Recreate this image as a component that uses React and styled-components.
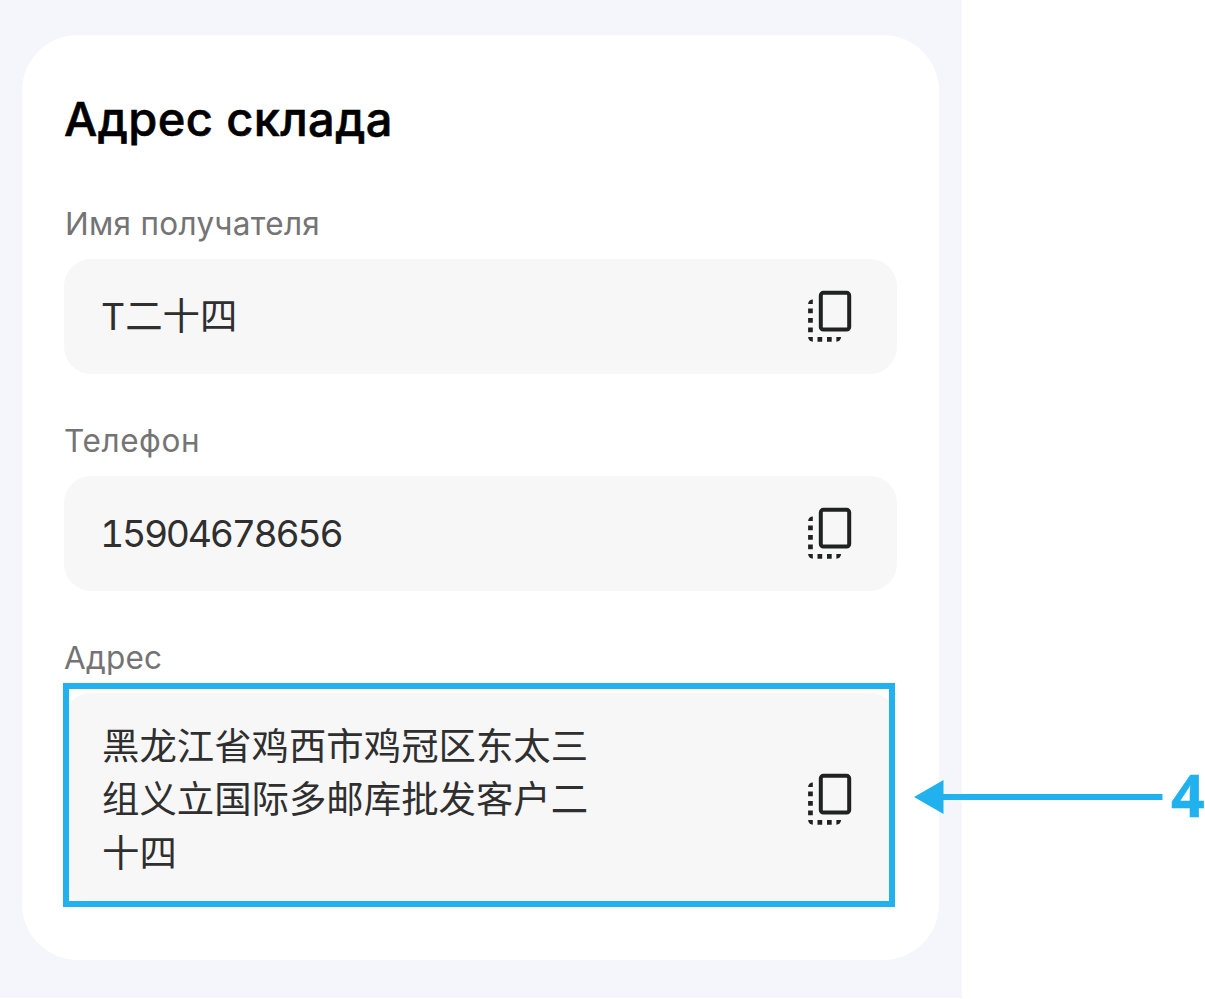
import React from 'react';
import styled, { createGlobalStyle } from 'styled-components';

const GlobalStyle = createGlobalStyle`
  * {
    box-sizing: border-box;
  }

  body {
    margin: 0;
    background: #fff;
    font-family: Inter, 'Noto Sans CJK SC', sans-serif;
    overflow: hidden;
  }
`;

const Page = styled.div`
  display: flex;
  width: 1205px;
  height: 999px;
`;

const Panel = styled.main`
  flex: none;
  width: 962px;
  height: 998px;
  padding: 34.5px 23px 0 22px;
  background: #f4f6fb;
`;

const Card = styled.section`
  height: 925px;
  padding: 54px 42px 0;
  border-radius: 56px;
  background: #fff;
`;

const Title = styled.h1`
  margin: 0;
  height: 60px;
  font-size: 47px;
  font-weight: 500;
  line-height: 60px;
  letter-spacing: ${(props) => props.$spacing};
  color: #000;
  -webkit-text-stroke: 0.6px #000;
  white-space: nowrap;
`;

const Field = styled.div`
  margin-top: ${(props) => props.$gap}px;
`;

const Label = styled.div`
  height: 40px;
  padding-left: ${(props) => props.$indent || 0}px;
  font-size: 31.5px;
  line-height: 40px;
  letter-spacing: ${(props) => props.$spacing || 'normal'};
  color: #747474;
  white-space: nowrap;
`;

const ValueBox = styled.div`
  display: flex;
  align-items: center;
  justify-content: space-between;
  height: 115px;
  margin-top: 15px;
  padding: 0 45px 0 38px;
  border-radius: 27px;
  background: #f7f7f7;
`;

const Value = styled.span`
  max-width: 500px;
  padding-top: 2px;
  margin-left: ${(props) => props.$shift || 0}px;
  font-size: 37.4px;
  line-height: 53.4px;
  letter-spacing: ${(props) => props.$spacing || 'normal'};
  font-feature-settings: 'tnum';
  color: #2f2f2f;
`;

const Highlight = styled.div`
  width: 832px;
  height: 224px;
  margin: 5px 0 0 -1px;
  border: 6px solid #20b1ee;
  overflow: hidden;
`;

const AddressBox = styled(ValueBox)`
  width: 833px;
  height: 213px;
  margin: 4px 0 0 -5px;
`;

const CopyButton = styled.button`
  flex: none;
  display: flex;
  padding: 0;
  border: 0;
  background: none;
  cursor: pointer;
`;

const Callout = styled.aside`
  position: absolute;
  top: 757px;
  left: 914px;
  display: flex;
  align-items: center;
  height: 80px;
`;

const CalloutNumber = styled.span`
  margin: -6px 0 0 8px;
  font-family: 'Open Sans', sans-serif;
  font-size: 59px;
  font-weight: 700;
  line-height: 80px;
  color: #20b1ee;
  -webkit-text-stroke: 0.5px #20b1ee;
`;

const CopyIcon = () => (
  <svg width="44" height="52" viewBox="0 0 44 52" fill="#202221">
    <rect x="12.8" y="2.8" width="28.4" height="36.8" rx="2.6" fill="none" stroke="#202221" strokeWidth="4" />
    <path d="M4.8 9.4v4.7H.1A4.7 4.7 0 0 1 4.8 9.4Z" />
    <path d="M.1 18.6h4.7v4.7H.1ZM.1 28h4.7v4.7H.1ZM.1 37.6h4.7v4.7H.1Z" />
    <path d="M.1 47h4.7v4.7A4.7 4.7 0 0 1 .1 47Z" />
    <path d="M9.5 47h4.7v4.7H9.5ZM19 47h4.7v4.7H19Z" />
    <path d="M28.4 47h4.7a4.7 4.7 0 0 1-4.7 4.7Z" />
  </svg>
);

const Arrow = () => (
  <svg width="249" height="34" viewBox="0 0 249 34" fill="#20b1ee">
    <path d="M0 17 29.5 0v14H248.5v6H29.5v14Z" />
  </svg>
);

const Copy = () => (
  <CopyButton type="button">
    <CopyIcon />
  </CopyButton>
);

const App = () => {
  return (
    <Page>
      <GlobalStyle />
      <Panel>
        <Card>
          <Title $spacing="0.4px">Адрес склада</Title>
          <Field $gap={55}>
            <Label $spacing="0.3px" $indent={1}>Имя получателя</Label>
            <ValueBox>
              <Value $shift={-1}>T二十四</Value>
              <Copy />
            </ValueBox>
          </Field>
          <Field $gap={47}>
            <Label $spacing="0.6px">Телефон</Label>
            <ValueBox>
              <Value $spacing="-2.3px" $shift={-2}>15904678656</Value>
              <Copy />
            </ValueBox>
          </Field>
          <Field $gap={47}>
            <Label $spacing="0.2px">Адрес</Label>
            <Highlight>
              <AddressBox>
                <Value>黑龙江省鸡西市鸡冠区东太三组义立国际多邮库批发客户二十四</Value>
                <Copy />
              </AddressBox>
            </Highlight>
          </Field>
        </Card>
      </Panel>
      <Callout>
        <Arrow />
        <CalloutNumber>4</CalloutNumber>
      </Callout>
    </Page>
  );
};

export default App;
